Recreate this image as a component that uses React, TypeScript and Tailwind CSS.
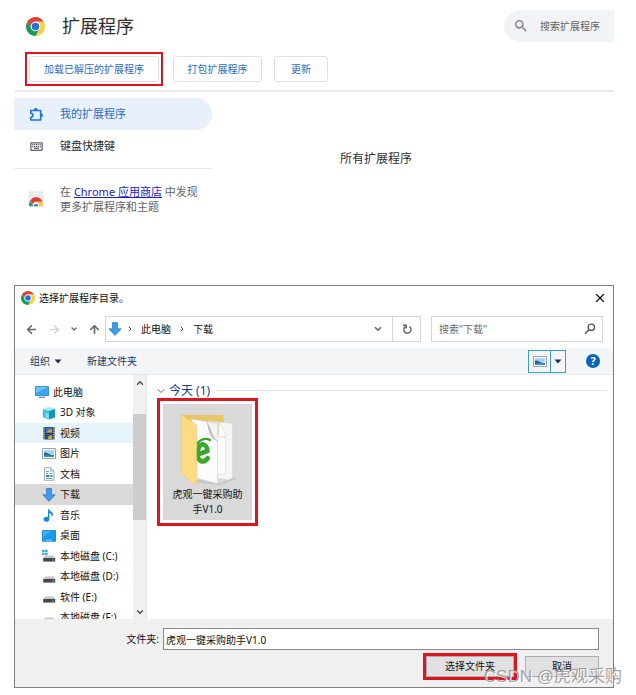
import { useState } from "react";
import type { ReactNode } from "react";
import { ArrowLeft, ArrowRight, ArrowUp, ChevronDown, ChevronRight, ChevronUp, X } from "lucide-react";
import { MdOutlineKeyboard, MdSearch } from "react-icons/md";

const ChromeLogo = ({ className }: { className?: string }) => {
  const arm = "M24 12H44.78A24 24 0 0 0 3.22 12L13.61 30A12 12 0 0 1 24 12z";
  return (
    <svg viewBox="0 0 48 48" className={className} aria-hidden="true">
      <path d={arm} fill="#db4437" />
      <path d={arm} fill="#ffcd40" transform="rotate(120 24 24)" />
      <path d={arm} fill="#0f9d58" transform="rotate(240 24 24)" />
      <circle cx="24" cy="24" r="12" fill="#fff" />
      <circle cx="24" cy="24" r="9.500" fill="#2a6fe0" />
    </svg>
  );
};

const StoreIcon = () => (
  <svg viewBox="0 0 48 48" className="h-4 w-4" aria-hidden="true">
    <path d="M1 1h46v45H1z" fill="#e9eaef" />
    <path d="M17 6h14v4H17z" fill="#fff" />
    <path d="M6 30a20 20 0 0 1 37 2H24a9 9 0 0 0-9 8z" fill="#d93f35" />
    <path d="M4 46a20 20 0 0 1 2-16l11 16z" fill="#1e9e55" />
    <path d="M43 32a20 20 0 0 1 1 14H31l-1-14z" fill="#fbc934" />
    <path d="M15 46a9 9 0 1 1 18 0z" fill="#fff" />
    <path d="M17 46a7 7 0 1 1 14 0z" fill="#2f6fe0" />
  </svg>
);

const ExtensionIcon = () => (
  <svg viewBox="0 0 15 15" className="h-[15px] w-[15px]" aria-hidden="true">
    <path
      d="M1.800 3.500H11.700V13H1.800V10.200C3.300 10 4 9.300 4 8.200S3.300 6.400 1.800 6.200z"
      fill="none"
      stroke="#1a73e8"
      strokeWidth="1.600"
      strokeLinejoin="round"
    />
    <path d="M4.800 3.400a2 2.400 0 0 1 4 0zM11.800 6.200a2.200 2 0 0 1 0 4z" fill="#1a73e8" />
  </svg>
);

const DownArrowIcon = ({ className = "h-[14px] w-[14px]" }: { className?: string }) => (
  <svg viewBox="0 0 14 14" className={className} aria-hidden="true">
    <path d="M4.5.6h5v6.2h3.7L7 13.4.8 6.8h3.7z" fill="#3d9be9" stroke="#2377c4" strokeWidth=".7" />
  </svg>
);

const ComputerIcon = () => (
  <svg viewBox="0 0 14 14" className="h-[14px] w-[14px]" aria-hidden="true">
    <path d="M.5 1.5h13v9H.5z" fill="#3aa5ee" stroke="#1c6fb0" strokeWidth=".7" />
    <path d="M1 2h11.8L1 8z" fill="#6cc4fa" />
    <path d="M4 12.3h6" stroke="#5e7c90" strokeWidth="1.2" />
  </svg>
);

const CubeIcon = () => (
  <svg viewBox="0 0 14 14" className="h-[14px] w-[14px]" aria-hidden="true">
    <path d="M.8 3 7 .8 13.2 3 7 5z" fill="#a8e8f2" />
    <path d="M.8 3 7 5v8.4L.8 11.2z" fill="#41c2dc" />
    <path d="M13.2 3 7 5v8.4l6.2-2.2z" fill="#1593b5" />
    <path d="M3.5 6.2 7 7.5v5.2l-3.5-1.3z" fill="#7bdcec" />
  </svg>
);

const FilmIcon = () => (
  <svg viewBox="0 0 14 14" className="h-[14px] w-[14px]" aria-hidden="true">
    <path d="M1.5 1h11v12.5h-11z" fill="#35383d" />
    <path d="M4 1.5h6v5H4z" fill="#3878c9" />
    <path d="M4 7.5h6V13H4z" fill="#26518a" />
    <path d="M6.5 4.2 10 3v3.5H4.5zM6.5 10l3.5-1v4H6z" fill="#d9a53a" />
    <path d="M2.7 1.5v12M11.3 1.5v12" stroke="#e6e6e6" strokeDasharray="1 1.2" />
  </svg>
);

const PictureIcon = () => (
  <svg viewBox="0 0 14 11" className="h-[11px] w-[14px]" aria-hidden="true">
    <path d="M.5.5h13v10H.5z" fill="#fff" stroke="#9ba1a6" />
    <path d="M2 2h10v4H2z" fill="#a5d6f5" />
    <path d="M2 4.500c3-.500 4 2 10 2.500v2H2z" fill="#1f6a8c" />
    <path d="M2 7.800c4-1 6-.4 10 0V9H2z" fill="#3c8fd0" />
  </svg>
);

const DocumentIcon = () => (
  <svg viewBox="0 0 14 14" className="h-[14px] w-[14px]" aria-hidden="true">
    <path d="M2.5.7h6.3L12 3.8v9.5H2.500z" fill="#fff" stroke="#8c9499" strokeWidth=".8" />
    <path d="M8.600.8V4H12" fill="#dfe5e9" stroke="#8c9499" strokeWidth=".7" />
    <path d="M4 4.500h3M4 6.500h2M8 6.500h2.500M4 11.400h6.500" stroke="#4aa3c9" />
    <path d="M4 8h3.500v2H4zM8.500 8h2v2h-2z" fill="#2c83b0" />
  </svg>
);

const MusicIcon = () => (
  <svg viewBox="0 0 14 14" className="h-[14px] w-[14px]" aria-hidden="true">
    <path d="M6 .3c.5 2.5 5 3.200 5 6 0 1.200-.5 2-1.200 2.700.5-2.300-1.200-3.500-2.500-4v6.200A2.900 2.500 0 1 1 6 9.200z" fill="#1387dc" />
  </svg>
);

const DesktopIcon = () => (
  <svg viewBox="0 0 14 12" className="h-3 w-[14px]" aria-hidden="true">
    <path d="M.4.6h13.200v10.600H.4z" fill="#159cf0" stroke="#0c6fb5" strokeWidth=".8" />
    <path d="M1 1h8L1 7z" fill="#38b2fa" />
    <path d="M1.500 10.200h1M4 10.200h6" stroke="#bfe5ff" strokeWidth=".8" />
  </svg>
);

const DriveIcon = ({ system = false }: { system?: boolean }) => (
  <svg viewBox="0 0 14 14" className="h-[14px] w-[14px]" aria-hidden="true">
    {system && <path d="M.2.8h2.300v2.200H.2zM3.200.8h2.300v2.200H3.200zM.2 3.700h2.300v2.200H.2zM3.200 3.700h2.300v2.200H3.200z" fill="#12a5e4" />}
    <path d="M3.200 6.500h8L13.200 9H1.200z" fill="#c4c6c8" />
    <path d="M1.200 9h12v3.600h-12z" fill="#45484b" />
    <path d="M10.300 11h1.600" stroke="#58dc6c" strokeWidth="1.200" />
  </svg>
);

const FolderIcon = () => (
  <svg viewBox="0 0 171 222" className="h-[74px] w-[57px]" aria-hidden="true">
    <path d="M48 208l14-10 58 14 45-20 6 5-50 20z" fill="#c6c6c6" />
    <path d="M8 6h125v135H8z" fill="#e9c566" />
    <path d="M88 24l73 7v164l-14 6-59-10z" fill="#f6f6f6" stroke="#d2d2d2" strokeWidth="2" />
    <path d="M84 30l36-2 19 34v122H84z" fill="#fff" stroke="#d6d6d6" strokeWidth="2" />
    <path d="M119 72h20M119 30v38" fill="none" stroke="#d0b98c" strokeWidth="2" />
    <path d="M38 18l48 8 30 56v130l-78-20z" fill="#fcfcfc" stroke="#d0d0d0" strokeWidth="2" />
    <path d="M82 26l34 6v54C101 74 104 62 82 26z" fill="#f3f3f3" stroke="#d0d0d0" strokeWidth="2" />
    <path d="M84 27c14 20 8 38 32 58C98 78 88 62 84 27z" fill="#bbb" />
    <g fill="none" stroke="#37a82c" strokeLinecap="round">
      <path d="M58 124l27-10C85 92 62 84 57 112c-6 30 12 43 29 24" strokeWidth="14" />
      <path d="M54 92c11-14 28-18 39-11" strokeWidth="7" />
    </g>
    <path d="M8 6l41 27c3 2 4 5 4 9v164c0 8-3 10-8 6L11 186c-3-2-4-5-4-9V10z" fill="#fbdc83" stroke="#e6c363" strokeWidth="1.5" />
  </svg>
);

const RefreshIcon = () => (
  <svg viewBox="0 0 12 12" className="h-3 w-3" fill="none" stroke="#666" strokeWidth="1.4" aria-hidden="true">
    <path d="M8.400 3.600a3.600 3.600 0 1 1-3.700-.2M2 2.200H5.200V5.400" />
  </svg>
);

const LensIcon = () => (
  <svg viewBox="0 0 12 12" className="h-3 w-3 shrink-0" fill="none" stroke="#555" strokeWidth="1.4" aria-hidden="true">
    <circle cx="7.3" cy="4.3" r="3.2" />
    <path d="M5 6.700 1 10.800" />
  </svg>
);

const Caret = () => (
  <svg viewBox="0 0 8 5" className="h-[5px] w-2" fill="#1e2f4d" aria-hidden="true">
    <path d="M.5.5h7L4 4.500z" />
  </svg>
);

interface Place {
  name: string;
  icon: ReactNode;
}

const places: Place[] = [
  { name: "3D 对象", icon: <CubeIcon /> },
  { name: "视频", icon: <FilmIcon /> },
  { name: "图片", icon: <PictureIcon /> },
  { name: "文档", icon: <DocumentIcon /> },
  { name: "下载", icon: <DownArrowIcon /> },
  { name: "音乐", icon: <MusicIcon /> },
  { name: "桌面", icon: <DesktopIcon /> },
  { name: "本地磁盘 (C:)", icon: <DriveIcon system /> },
  { name: "本地磁盘 (D:)", icon: <DriveIcon /> },
  { name: "软件 (E:)", icon: <DriveIcon /> },
  { name: "本地磁盘 (F:)", icon: <DriveIcon /> },
];

const getPlaceColor = (name: string, selected: string) => {
  if (name === selected) return "bg-[#d9d9d9]";
  if (name === "视频") return "bg-[#e5f3fb]";
  return "hover:bg-[#e5f3fb]";
};

const ExtensionsPage = () => (
  <section>
    <header className="flex items-center justify-between pt-[10px]">
      <div className="flex items-center gap-[17px] pl-3">
        <ChromeLogo className="h-[19px] w-[19px]" />
        <h1 className="text-[18px] leading-8 text-[#2c2e31]">扩展程序</h1>
      </div>
      <label className="flex h-8 w-[110px] items-center gap-[11px] rounded-l-full bg-[#f1f3f4] pl-[9px]">
        <MdSearch className="h-4 w-4 shrink-0 text-[#7a7e83]" />
        <input
          type="search"
          aria-label="搜索扩展程序"
          placeholder="搜索扩展程序"
          className="w-full min-w-0 bg-transparent text-[10px] outline-none placeholder:text-[#5f6368]"
        />
      </label>
    </header>

    <div className="flex items-center gap-[10px] border-b-2 border-[#e9eaec] pt-[10px] pb-1 pl-[11px] text-[10px] text-[#2b6cc4]">
      <div className="border-2 border-[#e0141f] p-[2px]">
        <button className="h-[26px] w-[130px] rounded-[3px] border border-[#dfe1e5]">
          加载已解压的扩展程序
        </button>
      </div>
      <button className="h-[26px] w-[89px] rounded-[3px] border border-[#dfe1e5]">打包扩展程序</button>
      <button className="ml-[2px] h-[26px] w-[54px] rounded-[3px] border border-[#dfe1e5]">更新</button>
    </div>

    <div className="flex pt-[6px]">
      <nav className="w-[198px] text-[11px]">
        <a href="#extensions" className="flex h-8 items-center gap-4 rounded-r-full bg-[#e8f0fc] pl-[15px] text-[#2b6cc4]">
          <ExtensionIcon />
          我的扩展程序
        </a>
        <a href="#shortcuts" className="flex h-8 items-center gap-4 pl-[15px] text-[#2c2e31]">
          <MdOutlineKeyboard className="h-[15px] w-[15px] text-[#5f6368]" />
          键盘快捷键
        </a>
        <div className="mt-[6px] flex items-center gap-4 border-t border-[#e8eaed] pt-[15px] pl-[14px] leading-[15px] text-[#5f6368]">
          <StoreIcon />
          <p className="whitespace-nowrap">
            在{" "}
            <a href="#store" className="text-[#1a1ad0] underline">
              Chrome 应用商店
            </a>{" "}
            中发现
            <br />
            更多扩展程序和主题
          </p>
        </div>
      </nav>
      <main className="flex-1 pt-[53px] pl-32">
        <h2 className="text-[12px] leading-4 text-[#2c2e31]">所有扩展程序</h2>
      </main>
    </div>
  </section>
);

const FolderDialog = () => {
  const [selected, setSelected] = useState("下载");
  const [folder, setFolder] = useState("虎观一键采购助手V1.0");

  return (
    <section role="dialog" aria-label="选择扩展程序目录。" className="relative border border-[#7c7c7c] bg-white text-[10px] text-[#111]">
      <div className="flex h-6 items-center gap-1 px-[6px]">
        <ChromeLogo className="h-[14px] w-[14px]" />
        <h2 className="flex-1">选择扩展程序目录。</h2>
        <button aria-label="关闭">
          <X className="h-[14px] w-[14px]" strokeWidth={2} />
        </button>
      </div>

      <div className="flex h-[38px] items-center px-[10px]">
        <div className="flex w-20 items-center justify-between pr-1 text-[#666]">
          <button aria-label="后退">
            <ArrowLeft className="h-[13px] w-[13px]" strokeWidth={3} />
          </button>
          <button aria-label="前进" className="text-[#d5d5d5]">
            <ArrowRight className="h-[13px] w-[13px]" strokeWidth={3} />
          </button>
          <button aria-label="最近浏览的位置">
            <ChevronDown className="h-2 w-2" strokeWidth={4} />
          </button>
          <button aria-label="上移">
            <ArrowUp className="h-[13px] w-[13px]" strokeWidth={3} />
          </button>
        </div>
        <div className="flex h-[26px] flex-1 items-center border border-[#d5d5d5] pl-[2px]">
          <DownArrowIcon />
          <ChevronRight className="mx-1 h-2 w-2 text-[#444]" strokeWidth={3} />
          <button className="mx-[3px]">此电脑</button>
          <ChevronRight className="mx-1 h-2 w-2 text-[#444]" strokeWidth={3} />
          <button className="mx-[3px]">下载</button>
          <button aria-label="以前的位置" className="ml-auto flex w-7 justify-center text-[#666]">
            <ChevronDown className="h-[10px] w-[10px]" strokeWidth={4} />
          </button>
          <button aria-label="刷新" className="flex h-full w-7 items-center justify-center border-l border-[#d5d5d5]">
            <RefreshIcon />
          </button>
        </div>
        <label className="ml-[10px] flex h-[26px] w-[172px] items-center border border-[#d5d5d5] pr-[6px] pl-[7px]">
          <input
            type="search"
            aria-label="搜索下载"
            placeholder={'搜索"下载"'}
            className="w-full min-w-0 bg-transparent outline-none placeholder:text-[#6b6b6b]"
          />
          <LensIcon />
        </label>
      </div>

      <div className="flex h-[27px] items-center border-b border-[#e6e8ea] bg-[#f4f5f7] pr-[13px] pl-[15px] text-[#1e3558]">
        <button className="flex items-center gap-1">
          组织 <Caret />
        </button>
        <button className="ml-[25px]">新建文件夹</button>
        <div className="ml-auto flex h-[23px] w-[38px] border border-[#3c9bcb]">
          <button aria-label="更改您的视图" className="flex flex-1 items-center justify-center">
            <PictureIcon />
          </button>
          <button aria-label="更多选项" className="flex w-[15px] items-center justify-center border-l border-[#3c9bcb]">
            <Caret />
          </button>
        </div>
        <button aria-label="帮助" className="ml-5 h-[14px] w-[14px] rounded-full bg-[#0b62b8] text-[11px] leading-[14px] font-bold text-white">
          ?
        </button>
      </div>

      <div className="flex h-[244px] overflow-hidden">
        <nav className="grid w-[118px] auto-rows-[20px_21px] content-start overflow-hidden pt-[7px]">
          <button className="flex items-center gap-1 pl-5 text-left" onClick={() => setSelected("此电脑")}>
            <ComputerIcon />
            此电脑
          </button>
          {places.map((place) => (
            <button
              key={place.name}
              onClick={() => setSelected(place.name)}
              className={`flex items-center gap-1 pl-[27px] text-left whitespace-nowrap ${getPlaceColor(place.name, selected)}`}
            >
              {place.icon}
              {place.name}
            </button>
          ))}
        </nav>
        <div className="flex w-[14px] flex-col items-center border-r border-[#e4e4e4] bg-[#f0f0f0] text-[#444]">
          <button aria-label="向上滚动" className="flex h-[15px] items-center">
            <ChevronUp className="h-[10px] w-[10px]" strokeWidth={3} />
          </button>
          <div className="mt-6 h-[106px] w-full bg-[#cdcdcd]" />
          <button aria-label="向下滚动" className="mt-auto flex h-[15px] items-center">
            <ChevronDown className="h-[10px] w-[10px]" strokeWidth={3} />
          </button>
        </div>
        <div className="flex-1 pt-2 pr-[6px] pl-2">
          <h3 className="flex h-[15px] items-center gap-[2px] text-[12px] leading-[15px] text-[#223a8c]">
            <ChevronDown className="h-3 w-3 text-[#666]" strokeWidth={2} />
            今天 (1)
            <span className="ml-1 h-px flex-1 bg-[#e2e2e2]" />
          </h3>
          <div className="ml-[2px] w-[101px] border-[3px] border-[#e0141f] p-[3px]">
            <button className="flex h-[116px] w-full flex-col items-center bg-[#d9d9d9] pt-[9px] leading-[15px]">
              <FolderIcon />
              <span className="w-[76px]">虎观一键采购助手V1.0</span>
            </button>
          </div>
        </div>
      </div>

      <div className="bg-[#f0f0f0] pt-[9px] pr-[14px] pb-[7px]">
        <label className="flex items-center justify-end gap-1">
          <span className="w-36 text-right">文件夹:</span>
          <input
            value={folder}
            onChange={(e) => setFolder(e.target.value)}
            className="h-[22px] min-w-0 flex-1 border border-[#8a8a8a] bg-white px-[2px] outline-none"
          />
        </label>
        <div className="flex items-center justify-end gap-2 pt-[3px]">
          <div className="border-[3px] border-[#e0141f]">
            <button className="h-[21px] w-[88px] border border-[#adadad] bg-[#e1e1e1]">选择文件夹</button>
          </div>
          <button className="h-[21px] w-[74px] border border-[#adadad] bg-[#e1e1e1]">取消</button>
        </div>
      </div>

      <p className="pointer-events-none absolute -right-[9px] bottom-0 font-['Liberation_Sans','Noto_Sans_CJK_SC',sans-serif] text-[17px] leading-5 whitespace-nowrap text-[#8c8c8c]/80 [text-shadow:1px_1px_0_#fff]">
        CSDN @虎观采购
      </p>
    </section>
  );
};

export default function App() {
  return (
    <div className="flex flex-col gap-[71px] bg-white pr-[22px] pl-[14px] font-['Noto_Sans','Noto_Sans_CJK_SC',sans-serif]">
      <ExtensionsPage />
      <FolderDialog />
    </div>
  );
}
